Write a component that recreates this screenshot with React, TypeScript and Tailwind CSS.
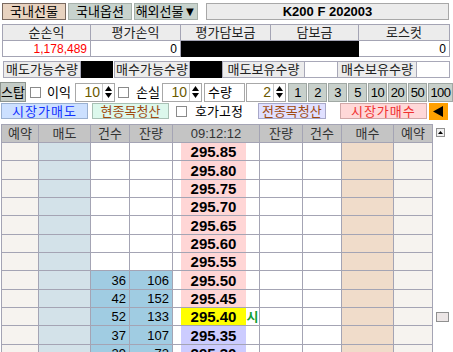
import React from "react";

const LINE = "border-[#a4a4b4]";

type Row = {
  price: string;
  bg: string;
  cnt?: string;
  qty?: string;
  mark?: string;
};

const rows: Row[] = [
  { price: "295.85", bg: "bg-[#ffd6d6]" },
  { price: "295.80", bg: "bg-[#ffd6d6]" },
  { price: "295.75", bg: "bg-[#ffd6d6]" },
  { price: "295.70", bg: "bg-[#ffd6d6]" },
  { price: "295.65", bg: "bg-[#ffd6d6]" },
  { price: "295.60", bg: "bg-[#ffd6d6]" },
  { price: "295.55", bg: "bg-[#ffd6d6]" },
  { price: "295.50", bg: "bg-[#ffd6d6]", cnt: "36", qty: "106" },
  { price: "295.45", bg: "bg-[#ffd6d6]", cnt: "42", qty: "152" },
  { price: "295.40", bg: "bg-[#ffff00]", cnt: "52", qty: "133", mark: "시" },
  { price: "295.35", bg: "bg-[#ccccff]", cnt: "37", qty: "107" },
  { price: "295.30", bg: "bg-[#ccccff]", cnt: "29", qty: "72" },
];

function Check() {
  return <div className="w-[11px] h-[11px] bg-white border border-[#8a8a8a] shrink-0" />;
}

function Spin({ value, width }: { value: string; width: string }) {
  return (
    <div className={`${width} h-[19px] flex bg-white border border-[#a8a8a8]`}>
      <div className="flex-1 flex items-center justify-end pr-[2px] text-[14px] text-[#6b5a00]">{value}</div>
      <div className="w-[12px] flex flex-col items-center justify-center gap-[2px] border-l border-[#c8c8c8]">
        <svg width="7" height="5" viewBox="0 0 7 5"><path d="M3.5 0L7 5H0z" fill="#000" /></svg>
        <svg width="7" height="5" viewBox="0 0 7 5"><path d="M0 0h7L3.5 5z" fill="#000" /></svg>
      </div>
    </div>
  );
}

function Qty({ label, w }: { label: string; w: string }) {
  return (
    <div className={`${w} h-[17px] bg-[#ececec] border border-[#a8a8b8] flex items-center justify-center text-[13px] text-[#222]`}>
      {label}
    </div>
  );
}

export default function App() {
  return (
    <div className="w-[453px] h-[352px] overflow-hidden bg-white text-black leading-none font-['Liberation_Sans','Noto_Sans_CJK_KR',sans-serif]">
      {/* tabs + title */}
      <div className="flex pt-[3px] pl-[2px] h-[24px]">
        <div className="w-[64px] h-[17px] bg-[#e8d3c0] border border-[#7a6a60] flex items-center justify-center text-[13px]">국내선물</div>
        <div className="ml-[2px] w-[64px] h-[17px] bg-[#c8d3cd] border border-[#a6b0aa] flex items-center justify-center text-[13px]">국내옵션</div>
        <div className="ml-[2px] w-[64px] h-[17px] bg-[#c8d3cd] border border-[#a6b0aa] flex items-center justify-center text-[13px]">해외선물▼</div>
        <div className="ml-[8px] w-[243px] h-[17px] bg-[#ececec] border border-[#a8a8a8] flex items-center justify-center text-[13px] font-bold">K200 F 202003</div>
      </div>

      {/* summary */}
      <div className={`ml-[2px] w-[448px] border-l border-t ${LINE}`}>
        <div className="flex h-[16px]">
          {[["순손익", "w-[88px]"], ["평가손익", "w-[90px]"], ["평가담보금", "w-[90px]"], ["담보금", "w-[88px]"], ["로스컷", "w-[91px]"]].map(([t, w]) => (
            <div key={t} className={`${w} bg-[#ececec] border-r border-b ${LINE} flex items-center justify-center text-[13px] text-[#222]`}>{t}</div>
          ))}
        </div>
        <div className="flex h-[16px]">
          <div className={`w-[88px] border-r border-b ${LINE} flex items-center justify-end pr-[3px] text-[12px] text-[#ff0000]`}>1,178,489</div>
          <div className={`w-[90px] border-r border-b ${LINE} flex items-center justify-end pr-[3px] text-[12px]`}>0</div>
          <div className="w-[178px] bg-black border-b border-black" />
          <div className={`w-[91px] border-r border-b ${LINE} flex items-center justify-end pr-[3px] text-[12px]`}>0</div>
        </div>
      </div>

      {/* quantities */}
      <div className="flex mt-[4px] ml-[3px] h-[17px]">
        <Qty label="매도가능수량" w="w-[78px]" />
        <div className="w-[32px] h-[17px] bg-black" />
        <div className="w-[1px]" />
        <Qty label="매수가능수량" w="w-[76px]" />
        <div className="w-[32px] h-[17px] bg-black" />
        <Qty label="매도보유수량" w="w-[83px]" />
        <div className="w-[32px] h-[17px] bg-white border-y border-[#a8a8b8]" />
        <Qty label="매수보유수량" w="w-[80px]" />
        <div className="w-[33px] h-[17px] bg-white border border-l-0 border-[#a8a8b8]" />
      </div>

      {/* stop / qty buttons */}
      <div className="flex items-center mt-[4px] h-[20px]">
        <div className="w-[26px] h-[20px] bg-[#c3cbc6] border border-[#8c948f] flex items-center justify-center text-[13px]">스탑</div>
        <div className="ml-[4px]"><Check /></div>
        <div className="ml-[6px] w-[28px] text-[13px]">이익</div>
        <Spin value="10" width="w-[40px]" />
        <div className="ml-[3px]"><Check /></div>
        <div className="ml-[7px] w-[26px] text-[13px]">손실</div>
        <Spin value="10" width="w-[40px]" />
        <div className="ml-[2px] w-[41px] h-[19px] bg-white border border-[#a8a8a8] flex items-center pl-[3px] text-[13px]">수량</div>
        <div className="ml-[1px]"><Spin value="2" width="w-[40px]" /></div>
        <div className="ml-[2px] flex gap-[1px]">
          {["1", "2", "3", "5", "10", "20", "50"].map((n) => (
            <div key={n} className="w-[19px] h-[19px] bg-[#c8d0cb] border border-[#a0a8a4] flex items-center justify-center text-[13px] tracking-[-0.5px]">{n}</div>
          ))}
          <div className="w-[25px] h-[19px] bg-[#c8d0cb] border border-[#a0a8a4] flex items-center justify-center text-[13px] tracking-[-0.5px]">100</div>
        </div>
      </div>

      {/* order buttons */}
      <div className="flex items-center mt-[1px] h-[16px] pl-[1px]">
        <div className="w-[87px] h-[16px] bg-[#cce0ff] border border-[#9ab0d0] flex items-center justify-center text-[13px] text-[#1030ff] tracking-[1px]">시장가매도</div>
        <div className="ml-[4px] w-[77px] h-[16px] bg-[#dcf8ec] border border-[#a8c0b4] flex items-center justify-center text-[13px] text-[#a04a10]">현종목청산</div>
        <div className="ml-[7px]"><Check /></div>
        <div className="ml-[8px] text-[13px]">호가고정</div>
        <div className="ml-[15px] w-[68px] h-[16px] bg-[#e0e0ff] border border-[#a8a8c8] flex items-center justify-center text-[13px] text-[#a04a10]">전종목청산</div>
        <div className="ml-[14px] w-[87px] h-[16px] bg-[#ffd8d8] border border-[#d0a8a8] flex items-center justify-center text-[13px] text-[#f03030] tracking-[1px]">시장가매수</div>
        <div className="ml-[2px] w-[19px] h-[17px] bg-[#ffa000] flex items-center justify-center">
          <svg width="10" height="11" viewBox="0 0 10 11"><path d="M0 5.5L10 0V11z" fill="#000" /></svg>
        </div>
      </div>

      {/* hoga table */}
      <div className="flex mt-[5px]">
        <div className={`ml-[1px] border-l border-t ${LINE}`}>
          <div className={`flex h-[18px] bg-[#c4c4c4] text-[13px] text-[#333] border-b ${LINE}`}>
            <div className={`w-[37px] border-r ${LINE} flex items-center justify-center`}>예약</div>
            <div className={`w-[52px] border-r ${LINE} flex items-center justify-center`}>매도</div>
            <div className={`w-[39px] border-r ${LINE} flex items-center justify-center`}>건수</div>
            <div className={`w-[43px] border-r ${LINE} flex items-center justify-center`}>잔량</div>
            <div className={`w-[87px] border-r ${LINE} flex items-center justify-center`}>09:12:12</div>
            <div className={`w-[43px] border-r ${LINE} flex items-center justify-center`}>잔량</div>
            <div className={`w-[39px] border-r ${LINE} flex items-center justify-center`}>건수</div>
            <div className={`w-[52px] border-r ${LINE} flex items-center justify-center`}>매수</div>
            <div className={`w-[39px] border-r ${LINE} flex items-center justify-center`}>예약</div>
          </div>
          {rows.map((r) => (
            <div key={r.price} className={`flex h-[18.35px] border-b ${LINE} text-[13px]`}>
              <div className={`w-[37px] bg-[#f6f3ef] border-r ${LINE}`} />
              <div className={`w-[52px] bg-[#d3e2e9] border-r ${LINE}`} />
              <div className={`w-[39px] border-r ${LINE} flex items-center justify-end pr-[3px] ${r.cnt ? "bg-[#a0cce2]" : "bg-white"}`}>{r.cnt}</div>
              <div className={`w-[43px] border-r ${LINE} flex items-center justify-end pr-[3px] ${r.qty ? "bg-[#a0cce2]" : "bg-white"}`}>{r.qty}</div>
              <div className="w-[8px] bg-white" />
              <div className={`w-[65px] ${r.bg} flex items-center justify-center font-bold text-[15px]`}>{r.price}</div>
              <div className={`w-[14px] border-r ${LINE} bg-white flex items-center justify-center text-[13px] text-[#10a030] font-bold`}>{r.mark}</div>
              <div className={`w-[43px] border-r ${LINE} bg-white`} />
              <div className={`w-[39px] border-r ${LINE} bg-white`} />
              <div className={`w-[52px] bg-[#f0dcca] border-r ${LINE}`} />
              <div className={`w-[39px] bg-[#f6f3ef] border-r ${LINE}`} />
            </div>
          ))}
        </div>
        {/* scrollbar */}
        <div className="relative w-[20px] h-[240px] bg-white">
          <div className="absolute left-[3px] top-[4px] w-[9px] h-[9px] bg-[#f0f0f0] border border-[#909090] flex items-center justify-center">
            <svg width="5" height="3" viewBox="0 0 5 3"><path d="M2.5 0L5 3H0z" fill="#000" /></svg>
          </div>
          <div className="absolute left-[3px] top-[188px] w-[13px] h-[10px] bg-[#ece6e6] border border-[#909090]" />
        </div>
      </div>
    </div>
  );
}
